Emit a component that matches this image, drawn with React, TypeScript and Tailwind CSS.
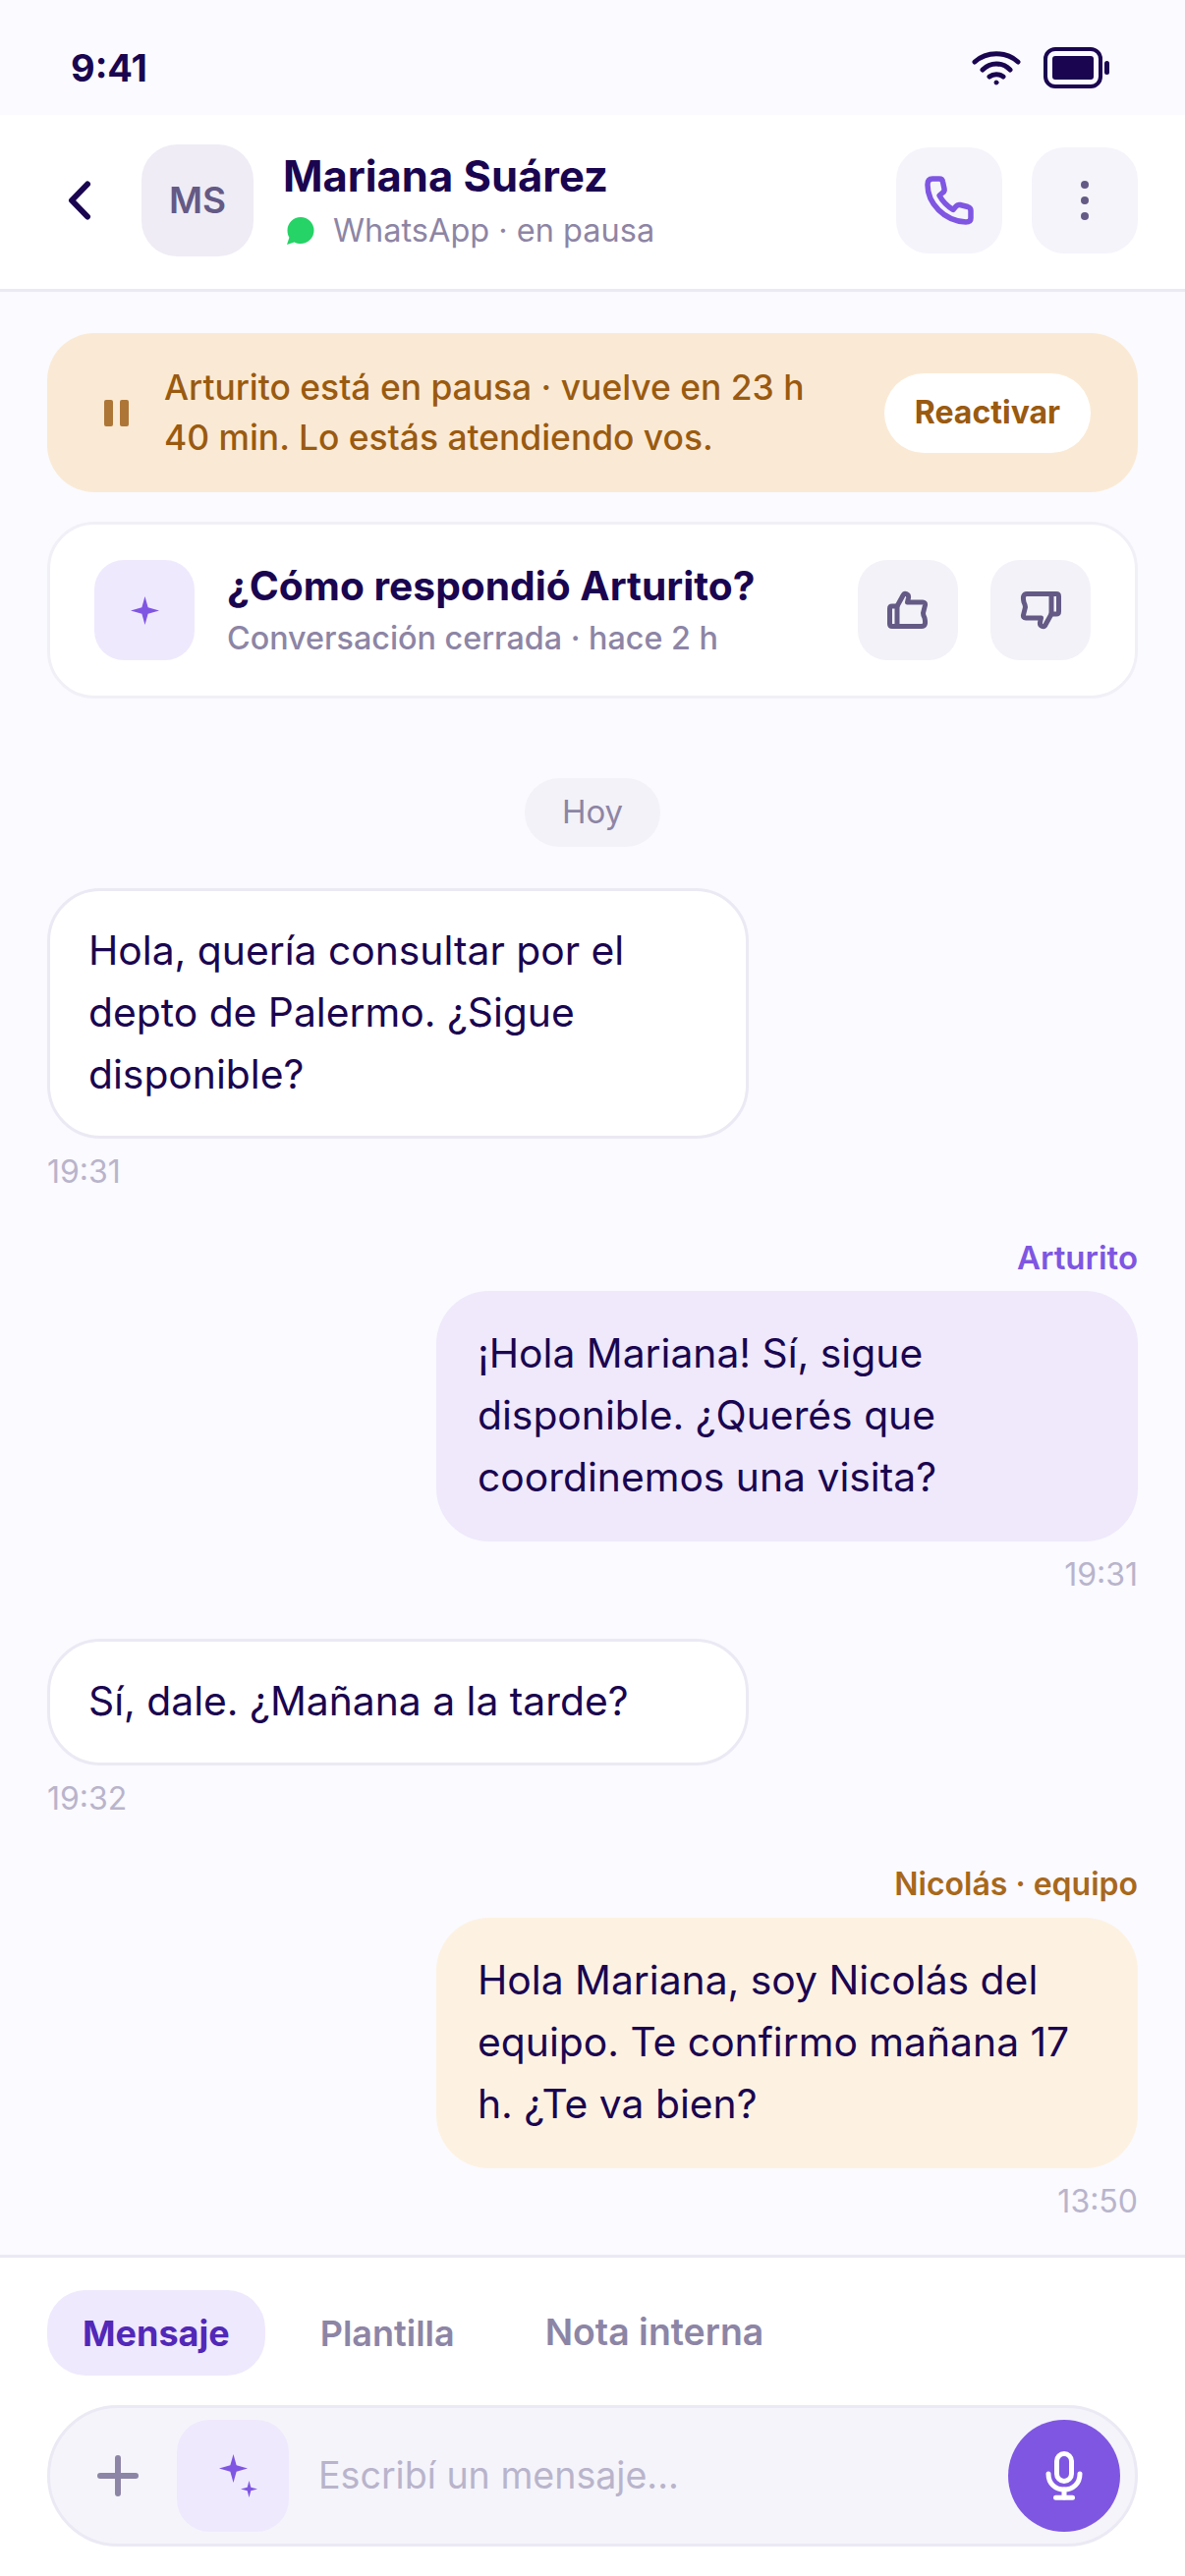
const font = { fontFamily: 'Inter, "Noto Sans", sans-serif' }

function Star({ size, className }: { size: number; className?: string }) {
  return (
    <svg width={size} height={size} viewBox="0 0 24 24" className={className}>
      <path d="M12 0L14.6 9.4L24 12L14.6 14.6L12 24L9.4 14.6L0 12L9.4 9.4Z" fill="currentColor" />
    </svg>
  )
}

function PhoneIcon() {
  return (
    <svg width="50" height="50" viewBox="0 0 50 50" fill="none" stroke="#7f56e2" strokeWidth="5.5" strokeLinejoin="round">
      <path d="M8 3H15Q18 3 18.5 6L20 13Q20.5 15.5 18.5 17L15 20Q20 29 29 34.5L32 31Q33.5 29 36 29.5L44 31.5Q47 32.5 47 35.5V43Q47 47 42 47C20 46 3 28 3 9Q3 3 8 3Z" />
    </svg>
  )
}

function MicIcon() {
  return (
    <svg width="38" height="50" viewBox="0 0 38 50" fill="none" stroke="#fff" strokeWidth="5" strokeLinecap="round">
      <rect x="11.5" y="2.5" width="15" height="28" rx="7.5" />
      <path d="M3 23C3 33 10 39 19 39S35 33 35 23" />
      <path d="M19 39V47" />
      <path d="M10.5 47.2H27.5" />
    </svg>
  )
}

function ThumbIcon({ down }: { down?: boolean }) {
  return (
    <svg width="42" height="40" viewBox="0 0 42 40" fill="none" stroke="#645a85" strokeWidth="5" strokeLinejoin="round" className={down ? 'rotate-180' : ''}>
      <path d="M10 16H5Q2.5 16 2.5 18.5V34Q2.5 36.5 5 36.5H10Z" />
      <path d="M10 16L15.5 6Q17 2.5 19.5 3.5Q22 4.5 21.5 7.5L20.5 12H36Q39 12 38.5 15L36.5 23Q36.5 25 38 28Q40 36.5 35 36.5H10" />
    </svg>
  )
}

function StatusBar() {
  return (
    <div className="flex h-[117px] items-center justify-between pl-[72px] pr-[76px] pt-[20px]">
      <span className="text-[38px] font-bold leading-none text-[#1a0550]">9:41</span>
      <div className="flex items-center gap-[23px]">
        <svg width="50" height="36" viewBox="0 0 50 36" fill="none" stroke="#1a0550" strokeWidth="5" strokeLinecap="round">
          <path d="M3 12C15 1 35 1 47 12" />
          <path d="M11 20C19 12 31 12 39 20" />
          <path d="M18 27C22 24 28 24 32 27" />
          <circle cx="25" cy="33" r="2" fill="#1a0550" strokeWidth="1" />
        </svg>
        <svg width="68" height="42" viewBox="0 0 68 42">
          <rect x="2" y="2" width="56" height="38" rx="10" fill="none" stroke="#1a0550" strokeWidth="4" />
          <rect x="9" y="9" width="42" height="24" rx="3" fill="#1a0550" />
          <rect x="62" y="14" width="5" height="14" rx="2.5" fill="#1a0550" />
        </svg>
      </div>
    </div>
  )
}

function Header() {
  return (
    <div className="flex h-[180px] items-center border-b-[3px] border-[#ebe9f3] bg-white pb-[3px] pl-[69px] pr-[48px]">
      <svg width="24" height="40" viewBox="0 0 24 40" fill="none" stroke="#1a0550" strokeWidth="6" strokeLinecap="round" strokeLinejoin="round" className="mr-[51px] shrink-0">
        <path d="M20 3.5L4 20L20 36.5" />
      </svg>
      <div className="flex h-[114px] w-[114px] shrink-0 items-center justify-center rounded-[36px] bg-[#efecf5] text-[37px] font-semibold text-[#645a85]">
        MS
      </div>
      <div className="ml-[30px] flex min-w-0 flex-1 flex-col gap-[8px]">
        <span className="text-[43.5px] font-bold leading-[54px] text-[#1a0550]">Mariana Suárez</span>
        <div className="flex items-center">
          <svg width="30" height="30" viewBox="0 0 30 30" className="ml-[3px] mr-[18px]">
            <path d="M15 1A13.5 13.5 0 1 1 15 28C13 28 10.5 27.5 8.5 26.4L1 29L3.4 21.8C2.2 19.8 1.5 17.4 1.5 14.5C1.5 7 7.5 1 15 1Z" fill="#25d366" />
          </svg>
          <span className="text-[32.5px] leading-[42px] text-[#8d85a5]">WhatsApp · en pausa</span>
        </div>
      </div>
      <div className="flex gap-[30px]">
        <button className="flex h-[108px] w-[108px] items-center justify-center rounded-[33px] bg-[#f5f4fb]">
          <PhoneIcon />
        </button>
        <button className="flex h-[108px] w-[108px] items-center justify-center rounded-[33px] bg-[#f5f4fb]">
          <svg width="8" height="40" viewBox="0 0 8 40" fill="#645a85">
            <circle cx="4" cy="4" r="4" />
            <circle cx="4" cy="20" r="4" />
            <circle cx="4" cy="36" r="4" />
          </svg>
        </button>
      </div>
    </div>
  )
}

function PauseBanner() {
  return (
    <div className="flex h-[162px] items-center rounded-[48px] bg-[#faead5] pl-[58px] pr-[48px]">
      <div className="flex shrink-0 gap-[7px] opacity-80">
        <span className="h-[27px] w-[9px] rounded-[2px] bg-[#9a5a10]" />
        <span className="h-[27px] w-[9px] rounded-[2px] bg-[#9a5a10]" />
      </div>
      <p className="ml-[36px] flex-1 text-[35.4px] font-medium leading-[51px] text-[#9a5a10]">
        Arturito está en pausa · vuelve en 23 h
        <br />
        40 min. Lo estás atendiendo vos.
      </p>
      <button className="flex h-[81px] w-[210px] items-center justify-center rounded-full bg-white text-[32px] font-bold text-[#9a5a10]">
        Reactivar
      </button>
    </div>
  )
}

function RatingCard() {
  return (
    <div className="mt-[30px] flex h-[180px] items-center rounded-[48px] border-[3px] border-[#f1f0f7] bg-white pl-[45px] pr-[45px]">
      <div className="flex h-[102px] w-[102px] shrink-0 items-center justify-center rounded-[30px] bg-[#efe9fd] text-[#7f56e2]">
        <Star size={29} />
      </div>
      <div className="ml-[33px] flex flex-1 flex-col gap-[9px]">
        <span className="text-[40.7px] font-bold leading-[48px] text-[#1a0550]">¿Cómo respondió Arturito?</span>
        <span className="text-[32.3px] font-medium leading-[40px] text-[#8d85a5]">Conversación cerrada · hace 2 h</span>
      </div>
      <div className="flex gap-[33px]">
        <button className="flex h-[102px] w-[102px] items-center justify-center rounded-[30px] bg-[#f3f2f8]">
          <ThumbIcon />
        </button>
        <button className="flex h-[102px] w-[102px] items-center justify-center rounded-[30px] bg-[#f3f2f8]">
          <ThumbIcon down />
        </button>
      </div>
    </div>
  )
}

function Incoming({ children, time }: { children: React.ReactNode; time: string }) {
  return (
    <div className="flex flex-col items-start">
      <div className="w-[714px] rounded-[54px] border-[3px] border-[#ebe9f3] bg-white px-[39px] pb-[31px] pt-[29px] text-[40.8px] leading-[63px] text-[#1a0550]">
        {children}
      </div>
      <span className="mt-[14px] text-[32px] leading-[40px] text-[#b9b4cb]">{time}</span>
    </div>
  )
}

function Outgoing({
  label,
  labelClass,
  bg,
  children,
  time,
}: {
  label: string
  labelClass: string
  bg: string
  children: React.ReactNode
  time: string
}) {
  return (
    <div className="mt-[2px] flex flex-col items-end">
      <span className={`mb-[14px] font-semibold leading-[40px] ${labelClass}`}>{label}</span>
      <div className={`w-[714px] rounded-[54px] px-[42px] pb-[34px] pt-[32px] text-[40.8px] leading-[63px] text-[#1a0550] ${bg}`}>
        {children}
      </div>
      <span className="mt-[14px] text-[32px] leading-[40px] text-[#b9b4cb]">{time}</span>
    </div>
  )
}

function Composer() {
  return (
    <div className="flex h-[327px] flex-col border-t-[3px] border-[#ebe9f3] bg-white px-[48px] pt-[33px]">
      <div className="flex items-center gap-[20px]">
        <span className="flex h-[87px] items-center justify-center rounded-[39px] bg-[#efe9fd] px-[36px] text-[36px] font-bold text-[#5228b8]">
          Mensaje
        </span>
        <span className="flex h-[87px] items-center justify-center px-[36px] text-[36px] font-semibold text-[#8d85a5]">
          Plantilla
        </span>
        <span className="flex h-[87px] items-center justify-center px-[36px] text-[37.4px] font-semibold text-[#8d85a5]">
          Nota interna
        </span>
      </div>
      <div className="mt-[30px] flex h-[144px] items-center rounded-full border-[3px] border-[#ebe9f3] bg-[#f5f4fb] pl-[48px] pr-[15px]">
        <svg width="42" height="42" viewBox="0 0 42 42" stroke="#8d85a5" strokeWidth="6" strokeLinecap="round" className="shrink-0">
          <path d="M21 3V39M3 21H39" />
        </svg>
        <div className="relative ml-[39px] h-[114px] w-[114px] shrink-0 rounded-[33px] bg-[#efe9fd] text-[#7f56e2]">
          <Star size={29} className="absolute left-[43px] top-[35px]" />
          <Star size={17} className="absolute left-[65px] top-[62px]" />
        </div>
        <span className="ml-[30px] flex-1 text-[37.6px] text-[#b9b4cb]">Escribí un mensaje...</span>
        <button className="flex h-[114px] w-[114px] shrink-0 items-center justify-center rounded-full bg-[#7f56e2]">
          <MicIcon />
        </button>
      </div>
    </div>
  )
}

export default function App() {
  return (
    <div className="flex h-[2622px] w-[1206px] flex-col overflow-hidden bg-[#fafaff]" style={font}>
      <StatusBar />
      <Header />
      <div className="flex flex-1 flex-col px-[48px] pt-[42px]">
        <PauseBanner />
        <RatingCard />
        <div className="mt-[81px] flex justify-center">
          <span className="flex h-[70px] w-[138px] items-center justify-center rounded-full bg-[#f3f2f8] text-[33px] text-[#8d85a5]">
            Hoy
          </span>
        </div>
        <div className="mt-[42px] flex flex-col gap-[45px]">
          <Incoming time="19:31">
            Hola, quería consultar por el depto de Palermo. ¿Sigue disponible?
          </Incoming>
          <Outgoing label="Arturito" labelClass="text-[33px] text-[#7f56e2]" bg="bg-[#efe9fb]" time="19:31">
            ¡Hola Mariana! Sí, sigue disponible. ¿Querés que coordinemos una visita?
          </Outgoing>
          <Incoming time="19:32">Sí, dale. ¿Mañana a la tarde?</Incoming>
          <Outgoing label="Nicolás · equipo" labelClass="text-[32px] text-[#a8681c]" bg="bg-[#fdf2e2]" time="13:50">
            Hola Mariana, soy Nicolás del equipo. Te confirmo mañana 17 h. ¿Te va bien?
          </Outgoing>
        </div>
      </div>
      <Composer />
    </div>
  )
}
